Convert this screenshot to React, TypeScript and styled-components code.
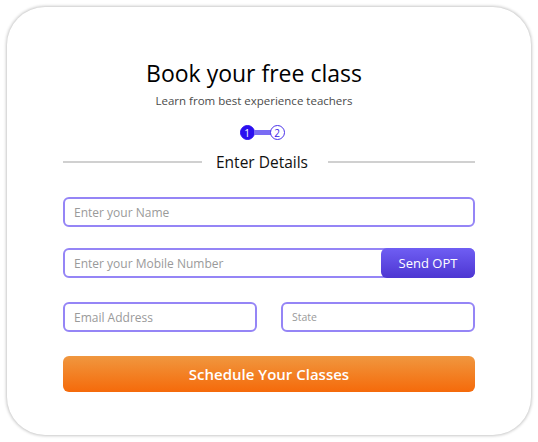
import React from "react";
import styled, { createGlobalStyle } from "styled-components";

const Global = createGlobalStyle`
  html, body { margin: 0; padding: 0; background: #ffffff; }
  body { font-family: "Open Sans", "Noto Sans", sans-serif; }
  * { box-sizing: border-box; }
`;

const Card = styled.div`
  margin: 7px;
  width: 524px;
  height: 428px;
  border-radius: 38px;
  background: #fff;
  box-shadow: 0 0 3px 1px rgba(0, 0, 0, 0.22);
  padding: 50px 56px 0 56px;
  display: flex;
  flex-direction: column;
`;

const Header = styled.div`
  display: flex;
  flex-direction: column;
  align-items: center;
  padding-right: 30px;
`;

const Title = styled.h1`
  margin: 0;
  font-size: 23px;
  line-height: 32px;
  font-weight: 500;
  color: #000;
`;

const Subtitle = styled.p`
  margin: 4px 0 0 0;
  font-size: 11.5px;
  line-height: 16px;
  color: #4a4a4a;
`;

const Stepper = styled.div`
  align-self: center;
  margin: 16px 0 0 -14px;
  display: flex;
  align-items: center;
`;

const StepDot = styled.div<{ $active?: boolean }>`
  width: 15px;
  height: 15px;
  border-radius: 50%;
  display: flex;
  align-items: center;
  justify-content: center;
  font-size: 10px;
  line-height: 1;
  background: ${(p) => (p.$active ? "#2b0ff0" : "#fff")};
  color: ${(p) => (p.$active ? "#fff" : "#3a20e8")};
  border: 1.5px solid ${(p) => (p.$active ? "#2b0ff0" : "#4a32ea")};
`;

const StepBar = styled.div`
  width: 17px;
  height: 5px;
  margin: 0 -1px;
  background: #7a6cf4;
`;

const DividerRow = styled.div`
  margin-top: 12px;
  display: flex;
  align-items: center;
`;

const Line = styled.div<{ $grow: number }>`
  flex: ${(p) => p.$grow} 1 0;
  height: 2px;
  background: #d0d0d0;
`;

const DividerText = styled.span`
  font-size: 15.5px;
  line-height: 20px;
  font-weight: 500;
  color: #111;
  padding: 0 20px 0 14px;
`;

const Form = styled.div`
  margin-top: 25px;
  display: flex;
  flex-direction: column;
  gap: 21px;
`;

const Input = styled.input<{ $small?: boolean }>`
  width: 100%;
  height: 30px;
  border: 2px solid #9585f6;
  border-radius: 6px;
  padding: 0 9px;
  font-family: inherit;
  font-size: ${(p) => (p.$small ? "10.5px" : "12px")};
  color: #333;
  outline: none;
  background: #fff;
  &::placeholder { color: #9a9a9a; }
`;

const PhoneRow = styled.div`
  position: relative;
  display: flex;
`;

const SendButton = styled.button`
  position: absolute;
  right: 0;
  top: 0;
  width: 94px;
  height: 30px;
  border: none;
  border-radius: 6px;
  background: linear-gradient(180deg, #6f5ef3 0%, #4d36d2 100%);
  color: #fff;
  font-family: inherit;
  font-size: 13px;
  cursor: pointer;
`;

const Pair = styled.div`
  display: grid;
  grid-template-columns: 1fr 1fr;
  gap: 24px;
  margin-top: 3px;
`;

const Submit = styled.button`
  margin-top: 3px;
  height: 36px;
  width: 100%;
  border: none;
  border-radius: 6px;
  background: linear-gradient(180deg, #f0973f 0%, #f56a0a 100%);
  color: #fff;
  font-family: inherit;
  font-size: 15px;
  font-weight: 600;
  cursor: pointer;
`;

export default function App() {
  return (
    <>
      <Global />
      <Card>
        <Header>
          <Title>Book your free class</Title>
          <Subtitle>Learn from best experience teachers</Subtitle>
        </Header>
        <Stepper>
          <StepDot $active>1</StepDot>
          <StepBar />
          <StepDot>2</StepDot>
        </Stepper>
        <DividerRow>
          <Line $grow={139} />
          <DividerText>Enter Details</DividerText>
          <Line $grow={147} />
        </DividerRow>
        <Form>
          <Input placeholder="Enter your Name" />
          <PhoneRow>
            <Input placeholder="Enter your Mobile Number" />
            <SendButton>Send OPT</SendButton>
          </PhoneRow>
          <Pair>
            <Input placeholder="Email Address" />
            <Input $small placeholder="State" />
          </Pair>
          <Submit>Schedule Your Classes</Submit>
        </Form>
      </Card>
    </>
  );
}
